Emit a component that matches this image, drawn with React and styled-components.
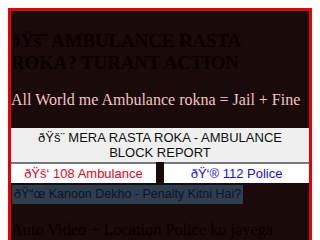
import React from "react";
import styled, { createGlobalStyle } from "styled-components";

const Global = createGlobalStyle`
  html, body { background: #ffffff; }
  body { margin: 8px; font-family: "Liberation Serif", "Times New Roman", serif; }
`;

const Panel = styled.div`
  border: 3px solid #e60000;
  background: #1a0a0a;
  padding: 0 0 40px;
`;

const Title = styled.h2`
  margin: 19px 0 0;
  padding-right: 6px;
  font-size: 18.8px;
  line-height: 22px;
  font-weight: bold;
  color: #0a0000;
`;

const Sub = styled.p`
  margin: 17px 0 19px;
  font-size: 16px;
  line-height: 18px;
  color: #f2c4c4;
`;

const Btn = styled.button`
  display: block;
  box-sizing: border-box;
  font-family: "Liberation Sans", Arial, sans-serif;
  font-size: 13px;
  line-height: 15px;
  cursor: pointer;
  border-radius: 0;
  margin: 0;
`;

const BigBtn = styled(Btn)`
  width: 100%;
  background: #efefef;
  color: #111;
  padding: 1px 6px 1px;
  border: 1px solid #efefef;
`;

const Row = styled.div`
  display: flex;
  justify-content: space-between;
`;

const HalfBtn = styled(Btn)`
  width: 48.6%;
  background: #ffffff;
  color: ${(p) => p.$c};
  padding: 2px 4px 2px;
  border: 0;
  border-top: 2px solid #777;
`;

const LawBtn = styled(Btn)`
  margin-top: 2px;
  margin-left: 1px;
  background: #2c3e50;
  color: #0d1520;
  font-size: 12.5px;
  padding: 2px 2px;
  border: 0;
`;

const Note = styled.p`
  margin: 17px 0 0;
  font-size: 16.3px;
  line-height: 18px;
  color: #0a0000;
`;

export default function App() {
  return (
    <>
      <Global />
      <Panel>
        <Title>ðŸš¨ AMBULANCE RASTA ROKA? TURANT ACTION</Title>
        <Sub>All World me Ambulance rokna = Jail + Fine</Sub>
        <BigBtn>ðŸš¨ MERA RASTA ROKA - AMBULANCE BLOCK REPORT</BigBtn>
        <Row>
          <HalfBtn $c="#e8001c">ðŸš‘ 108 Ambulance</HalfBtn>
          <HalfBtn $c="#1010d0">ðŸ‘® 112 Police</HalfBtn>
        </Row>
        <LawBtn>ðŸ“œ Kanoon Dekho - Penalty Kitni Hai?</LawBtn>
        <Note>Auto Video + Location Police ko jayega</Note>
      </Panel>
    </>
  );
}
